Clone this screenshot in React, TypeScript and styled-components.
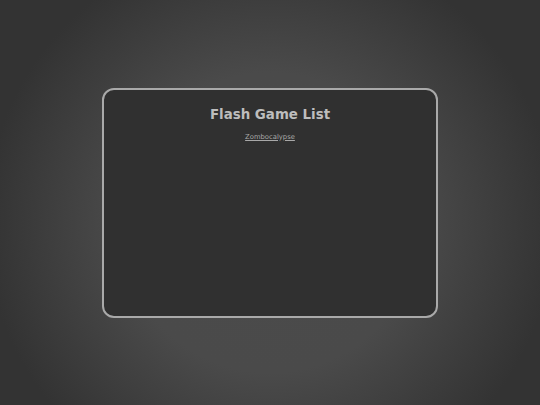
import React from "react";
import styled, { createGlobalStyle } from "styled-components";

const GlobalStyle = createGlobalStyle`
  html, body {
    margin: 0;
    padding: 0;
    height: 100%;
  }
  body {
    font-family: "DejaVu Sans", Verdana, sans-serif;
    background: radial-gradient(
      circle at 50% 55%,
      #4b4b4b 0,
      #4a4a4a 150px,
      #333333 285px
    );
    background-color: #333;
  }
  #root {
    height: 100%;
  }
`;

const Page = styled.main`
  height: 100vh;
  display: flex;
  align-items: center;
  justify-content: center;
`;

const Panel = styled.section`
  box-sizing: border-box;
  width: 336px;
  height: 230px;
  padding: 17px 20px;
  background: #303030;
  border: 2px solid #a9a9a9;
  border-radius: 12px;
  display: flex;
  flex-direction: column;
  align-items: center;
`;

const Title = styled.h1`
  margin: 0;
  font-size: 13.4px;
  line-height: 16px;
  font-weight: bold;
  color: #bdbdbd;
`;

const GameList = styled.ul`
  list-style: none;
  margin: 7px 0 0 0;
  padding: 0;
  text-align: center;
  line-height: 8px;
`;

const GameLink = styled.a`
  font-size: 6.8px;
  line-height: 8px;
  color: #a8a8a8;
  text-decoration: underline;
`;

const games = [{ name: "Zombocalypse", href: "#zombocalypse" }];

export default function App() {
  return (
    <>
      <GlobalStyle />
      <Page>
        <Panel>
          <Title>{"Flash Game List"}</Title>
          <GameList>
            {games.map((g) => (
              <li key={g.name}>
                <GameLink href={g.href}>{g.name}</GameLink>
              </li>
            ))}
          </GameList>
        </Panel>
      </Page>
    </>
  );
}
